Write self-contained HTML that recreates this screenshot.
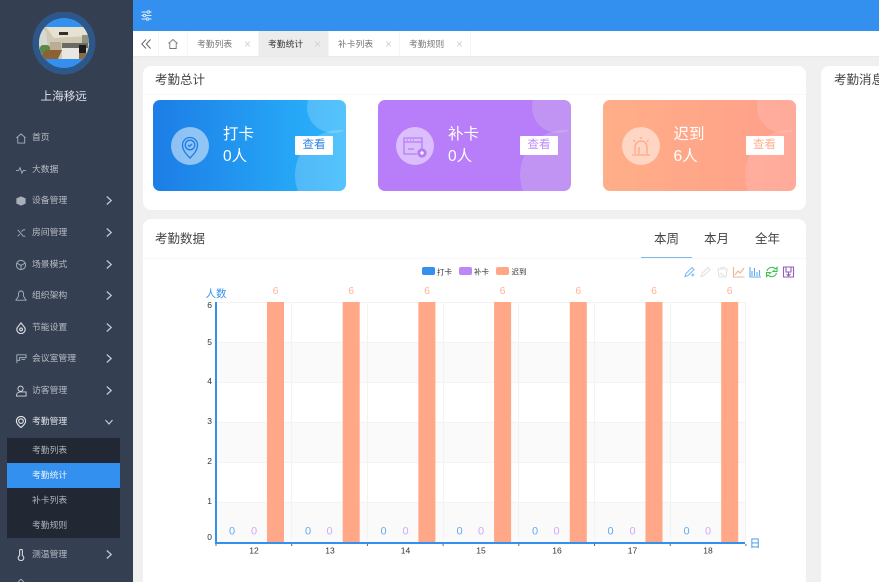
<!DOCTYPE html>
<html lang="zh"><head><meta charset="utf-8"><title>考勤统计</title>
<style>
*{box-sizing:border-box;margin:0;padding:0}
html,body{width:879px;height:582px;overflow:hidden;background:#f0f0f0;font-family:"Liberation Sans","Noto Sans CJK SC",sans-serif}
#root{position:relative;width:879px;height:582px;overflow:hidden;background:#f0f0f0;filter:blur(.3px)}
#side{position:absolute;left:0;top:0;width:133px;height:582px;background:#343f52;overflow:hidden}
#side .t{position:absolute;left:32px;font-size:8.8px;line-height:12px;color:#b9bec6;white-space:nowrap}
#side .ic{position:absolute;left:15px;width:12px;height:12px;fill:none;stroke:#a9afb9;stroke-width:1}
#side .ar{position:absolute;left:105.500px;width:6px;height:9px;fill:none;stroke:#c6cad0;stroke-width:1.200}
#sub{position:absolute;left:7px;top:438px;width:113px;height:100px;background:#212833}
#sub div{position:absolute;left:25px;font-size:8.8px;line-height:12px;color:#aeb3bb;white-space:nowrap}
#sub .a{position:absolute;left:0;top:25px;width:113px;height:25px;background:#3390ee}
#hd{position:absolute;left:133px;top:0;width:746px;height:31px;background:#3390ee}
#tabs{position:absolute;left:133px;top:31px;width:746px;height:25px;background:#fff;box-shadow:0 1px 1px rgba(0,0,0,.03)}
.tab{position:absolute;top:0;height:25px;border-right:1px solid #f5f5f5;font-size:8.8px;line-height:26px;color:#777}
.tab span{position:absolute;left:9px;white-space:nowrap}
.tab i{position:absolute;right:7px;top:0;font-style:normal;font-size:12px;color:#d0d0d0;line-height:26px}
.card{position:absolute;background:#fff;border-radius:8px}
.ct{position:absolute;left:12px;font-size:12.5px;line-height:16px;color:#444;white-space:nowrap}
.sc{position:absolute;top:100px;width:193px;height:91px;border-radius:7px;overflow:hidden;color:#fff}
.sc .b1,.sc .b2{position:absolute;border-radius:50%;background:rgba(255,255,255,.2)}
.sc .b1{left:154px;top:-19px;width:52px;height:52px}
.sc .b2{left:142px;top:30px;width:90px;height:90px}
.sc .c{position:absolute;left:18.500px;top:27px;width:38px;height:38px;border-radius:50%;background:rgba(255,255,255,.5)}
.sc svg{position:absolute;left:18.500px;top:27px;width:38px;height:38px;fill:none;stroke-width:1.300}
.sc .n{position:absolute;left:70.500px;font-size:15.500px;line-height:20px;white-space:nowrap}
.sc .btn{position:absolute;left:142.500px;top:36px;width:38px;height:19px;background:#fff;border-radius:1px;text-align:center;font-size:11.5px;line-height:19px}
</style></head><body><div id="root">

<div id="side">
<svg style="position:absolute;left:32px;top:12px" width="64" height="64" viewBox="0 0 64 64">
<defs><clipPath id="cp"><circle cx="32" cy="31" r="25"/></clipPath></defs>
<circle cx="32" cy="31" r="31.500" fill="#2d5788"/>
<circle cx="32" cy="31" r="25" fill="#3390ee"/>
<g clip-path="url(#cp)">
<rect x="5" y="15" width="54" height="32" fill="#cfc9b6"/>
<polygon points="14,15 59,15 56,24 22,26" fill="#e6e1d0"/>
<rect x="27" y="20" width="9" height="3" fill="#33302c"/>
<polygon points="5,15 14,19 16,38 5,47" fill="#d6d9d0"/>
<rect x="8" y="33" width="10" height="9" rx="3" fill="#5a8a48"/>
<polygon points="6,47 26,47 30,38 14,38" fill="#8c6234"/>
<rect x="18" y="30" width="11" height="8" fill="#b9ad96"/>
<rect x="30" y="31" width="26" height="5" fill="#6b6a63"/>
<rect x="30" y="36" width="17" height="11" fill="#e9e7e2"/>
<rect x="47" y="33" width="7" height="8" fill="#1d1c1c"/>
<rect x="47" y="41" width="12" height="6" fill="#8b6a45"/>
<rect x="50" y="23" width="9" height="8" fill="#90927e"/>
</g></svg>
<div style="position:absolute;left:40.5px;top:88px;font-size:11.6px;line-height:17px;color:#dfe2e6;white-space:nowrap">上海移远</div>

<svg class="ic" style="top:132px" viewBox="0 0 13 13"><path d="M3 6v6h7.500V6M1.500 6.500 6.500 2l5 4.500"/></svg>
<div class="t" style="top:131px">首页</div>
<svg class="ic" style="top:164px" viewBox="0 0 13 13"><path d="M1 7h3l1.500-3 2 6L9 7h3"/></svg>
<div class="t" style="top:163px">大数据</div>
<svg class="ic" style="top:195px" viewBox="0 0 13 13"><path d="M2 4 6.500 2 11 4v5L6.500 11 2 9z" fill="#a9afb9"/></svg>
<div class="t" style="top:194px">设备管理</div>
<svg class="ar" style="top:196px" viewBox="0 0 6 9"><path d="M.800.500 5.200 4.500.8 8.500"/></svg>
<svg class="ic" style="top:227px" viewBox="0 0 13 13"><path d="M3 3 9 10M3 10l2-2M9 3 7 5M9 3h2M9 10h2"/></svg>
<div class="t" style="top:226px">房间管理</div>
<svg class="ar" style="top:228px" viewBox="0 0 6 9"><path d="M.800.500 5.200 4.500.8 8.500"/></svg>
<svg class="ic" style="top:259px" viewBox="0 0 13 13"><circle cx="6.500" cy="6.500" r="5"/><path d="M2 4.500 6.500 7 11 4.500M6.500 7v4.500"/></svg>
<div class="t" style="top:258px">场景模式</div>
<svg class="ar" style="top:260px" viewBox="0 0 6 9"><path d="M.800.500 5.200 4.500.8 8.500"/></svg>
<svg class="ic" style="top:290px" viewBox="0 0 13 13"><path d="M4 6a2.800 3.500 0 1 1 5 0l1 2 2 3H1l2-3z"/></svg>
<div class="t" style="top:289px">组织架构</div>
<svg class="ar" style="top:291px" viewBox="0 0 6 9"><path d="M.800.500 5.200 4.500.8 8.500"/></svg>
<svg class="ic" style="top:322px;stroke:#d5d8dc;stroke-width:1.300" viewBox="0 0 13 13"><path d="M6.500 1 10.500 6a4.500 4.500 0 1 1-8 0z"/><circle cx="6.500" cy="8" r="1.500"/></svg>
<div class="t" style="top:321px">节能设置</div>
<svg class="ar" style="top:323px" viewBox="0 0 6 9"><path d="M.800.500 5.200 4.500.8 8.500"/></svg>
<svg class="ic" style="top:353px" viewBox="0 0 13 13"><path d="M2 11V2h10v3H5v3H2M7 7h4"/></svg>
<div class="t" style="top:352px">会议室管理</div>
<svg class="ar" style="top:354px" viewBox="0 0 6 9"><path d="M.800.500 5.200 4.500.8 8.500"/></svg>
<svg class="ic" style="top:385px;stroke:#d5d8dc" viewBox="0 0 13 13"><circle cx="6" cy="4" r="2.800"/><path d="M1.500 12c0-3 2-4.500 4.500-4.500H12V12z"/></svg>
<div class="t" style="top:384px">访客管理</div>
<svg class="ar" style="top:386px" viewBox="0 0 6 9"><path d="M.800.500 5.200 4.500.8 8.500"/></svg>
<svg class="ic" style="top:416px;stroke:#e6e8eb;stroke-width:1.200" viewBox="0 0 13 13"><path d="M6.500 12.500C3.500 10 1.500 7.500 1.500 5.500a5 5 0 0 1 10 0c0 2-2 4.500-5 7z"/><circle cx="6.500" cy="5.500" r="2.500"/></svg>
<div class="t" style="top:415px;color:#e4e6e9">考勤管理</div>
<svg style="position:absolute;left:104.500px;top:419px;fill:none;stroke:#c6cad0;stroke-width:1.200" width="8" height="6" viewBox="0 0 8 6"><path d="M.500 1 4 5 7.500 1"/></svg>

<div id="sub"><div class="a"></div>
<div style="top:6px">考勤列表</div><div style="top:31px;color:#eef4fc">考勤统计</div><div style="top:56px">补卡列表</div><div style="top:81px">考勤规则</div></div>

<svg class="ic" style="top:549px;stroke:#d5d8dc;stroke-width:1.200" viewBox="0 0 13 13"><path d="M5 7V1.800a1.500 1.500 0 0 1 3 0V7a3 3 0 1 1-3 0z"/></svg>
<div class="t" style="top:548px">测温管理</div>
<svg class="ar" style="top:550px" viewBox="0 0 6 9"><path d="M.800.500 5.200 4.500.8 8.500"/></svg>
<svg class="ic" style="top:579px" viewBox="0 0 13 13"><path d="M6.500 0 11 5H2z"/></svg>
</div>

<div id="hd"><svg style="position:absolute;left:8px;top:10px" width="11" height="11" viewBox="0 0 11 11" fill="none" stroke="#dcebfb" stroke-width="1"><path d="M.5 2h10M.5 5.500h10M.5 9h10"/><circle cx="7.500" cy="2" r="1.300" fill="#3390ee"/><circle cx="3.500" cy="5.500" r="1.300" fill="#3390ee"/><circle cx="6.500" cy="9" r="1.300" fill="#3390ee"/></svg></div>

<div id="tabs">
<div style="position:absolute;left:0;top:0;width:26px;height:25px;border-right:1px solid #f5f5f5"><svg style="position:absolute;left:8px;top:8px" width="10" height="10" viewBox="0 0 10 10" fill="none" stroke="#666" stroke-width="1"><path d="M5 .5.800 5 5 9.500M9.500.5 5.300 5l4.200 4.500"/></svg></div>
<div style="position:absolute;left:26px;top:0;width:29px;height:25px;border-right:1px solid #f5f5f5"><svg style="position:absolute;left:9px;top:8px" width="10" height="10" viewBox="0 0 10 10" fill="none" stroke="#777" stroke-width=".9"><path d="M.5 4.500 5 .5l4.500 4M1.800 4v5.500h6.400V4"/></svg></div>
<div class="tab" style="left:55px;width:71px"><span>考勤列表</span><i>×</i></div>
<div class="tab" style="left:126px;width:70px;background:#ececec;color:#333"><span>考勤统计</span><i>×</i></div>
<div class="tab" style="left:196px;width:71px"><span>补卡列表</span><i>×</i></div>
<div class="tab" style="left:267px;width:71px"><span>考勤规则</span><i>×</i></div>
</div>

<div class="card" style="left:143px;top:66px;width:663px;height:144px">
<div class="ct" style="top:6px">考勤总计</div>
<div style="position:absolute;left:0;top:28px;width:663px;height:1px;background:#f9f9f9"></div>
</div>

<div class="sc" style="left:152.500px;background:linear-gradient(90deg,#1c7de6,#2ab6fc)">
<div class="b1"></div><div class="b2"></div><div class="c"></div>
<svg viewBox="0 0 38 38" stroke="#1c7de6"><path d="M19 31C14 26 11.500 22.500 11.500 18a7.500 7.500 0 0 1 15 0c0 4.500-2.500 8-7.500 13z"/><circle cx="19" cy="18" r="4.800"/><path d="M17 18l1.500 1.500 2.500-2.500"/></svg>
<div class="n" style="top:25px">打卡</div><div class="n" style="top:47px">0人</div>
<div class="btn" style="color:#2f86e6">查看</div></div>

<div class="sc" style="left:377.500px;background:#b87df8">
<div class="b1" style="background:rgba(220,220,230,.25)"></div><div class="b2" style="background:rgba(220,220,230,.25)"></div><div class="c"></div>
<svg viewBox="0 0 38 38" stroke="#b57cf5"><path d="M26 22V11H8v16h13M8 15h18"/><path d="M11 13h1M14 13h1M17 13h1M12 22h6"/><circle cx="26" cy="26" r="4" fill="#b57cf5"/><path d="M24 26h4M26 24v4" stroke="#fff"/></svg>
<div class="n" style="top:25px">补卡</div><div class="n" style="top:47px">0人</div>
<div class="btn" style="color:#c08df5">查看</div></div>

<div class="sc" style="left:603px;background:linear-gradient(90deg,#ffae88,#ff9f8a)">
<div class="b1" style="background:rgba(255,200,200,.3)"></div><div class="b2" style="background:rgba(255,200,200,.3)"></div><div class="c"></div>
<svg viewBox="0 0 38 38" stroke="#ffa883"><path d="M13 27v-7a6 6 0 0 1 12 0v7M10 28h18M19 10v2M11.500 13l1.500 1.500M26.500 13 25 14.500M17 27v-7"/></svg>
<div class="n" style="top:25px">迟到</div><div class="n" style="top:47px">6人</div>
<div class="btn" style="color:#ffb08e">查看</div></div>

<div class="card" style="left:143px;top:219px;width:663px;height:380px">
<div class="ct" style="top:12px">考勤数据</div>
<div style="position:absolute;left:0;top:39px;width:663px;height:1px;background:#f7f7f7"></div>
<div style="position:absolute;left:498px;top:38px;width:51px;height:1px;background:#7dbaf4"></div>
<div style="position:absolute;left:511px;top:12px;font-size:12.5px;line-height:16px;color:#444">本周</div>
<div style="position:absolute;left:561px;top:12px;font-size:12.5px;line-height:16px;color:#444">本月</div>
<div style="position:absolute;left:612px;top:12px;font-size:12.5px;line-height:16px;color:#444">全年</div>
</div>

<div class="card" style="left:821px;top:66px;width:80px;height:540px;overflow:hidden">
<div class="ct" style="top:6px;left:13px">考勤消息</div>
</div>

<svg style="position:absolute;left:0;top:0" width="879" height="582" viewBox="0 0 879 582" font-family="'Liberation Sans','Noto Sans CJK SC',sans-serif">
<g fill="#fafafa"><rect x="216" y="342" width="530" height="40"/><rect x="216" y="422" width="530" height="40"/><rect x="216" y="502" width="530" height="40"/></g>
<g stroke="#f3f3f3" stroke-width="1" fill="none">
<path d="M216 302.500h530M216 342.500h530M216 382.500h530M216 422.500h530M216 462.500h530M216 502.500h530"/>
<path d="M291.500 302v240M367.500 302v240M443.500 302v240M518.500 302v240M594.500 302v240M670.500 302v240M745.500 302v240"/>
</g>
<g fill="#ffa786">
<rect x="267" y="302" width="17" height="240"/><rect x="342.700" y="302" width="17" height="240"/><rect x="418.400" y="302" width="17" height="240"/><rect x="494.100" y="302" width="17" height="240"/><rect x="569.800" y="302" width="17" height="240"/><rect x="645.500" y="302" width="17" height="240"/><rect x="721.200" y="302" width="17" height="240"/>
</g>
<path d="M216 302v241.500M215 543h530" stroke="#3390ee" stroke-width="2" fill="none"/>
<path d="M216 544v2M291.700 544v2M367.400 544v2M443.100 544v2M518.800 544v2M594.500 544v2M670.200 544v2M745.900 544v2" stroke="#666" stroke-width="1"/>
<g font-size="8.500" fill="#333" text-anchor="end">
<text x="212" y="308">6</text><text x="212" y="345">5</text><text x="212" y="384">4</text><text x="212" y="424">3</text><text x="212" y="464">2</text><text x="212" y="504">1</text><text x="212" y="540">0</text>
</g>
<g font-size="8.500" fill="#333" text-anchor="middle">
<text x="254" y="553.500">12</text><text x="330" y="553.500">13</text><text x="405.500" y="553.500">14</text><text x="481" y="553.500">15</text><text x="557" y="553.500">16</text><text x="632.500" y="553.500">17</text><text x="708" y="553.500">18</text>
</g>
<g font-size="10.500" fill="#ffb496" text-anchor="middle">
<text x="275.500" y="294">6</text><text x="351.200" y="294">6</text><text x="427" y="294">6</text><text x="502.600" y="294">6</text><text x="578.300" y="294">6</text><text x="654" y="294">6</text><text x="729.700" y="294">6</text>
</g>
<g font-size="11" fill="#63aaf2" text-anchor="middle">
<text x="232" y="534.500">0</text><text x="308" y="534.500">0</text><text x="383.500" y="534.500">0</text><text x="459.500" y="534.500">0</text><text x="535" y="534.500">0</text><text x="610.500" y="534.500">0</text><text x="686.500" y="534.500">0</text>
</g>
<g font-size="11" fill="#cfa8fa" text-anchor="middle">
<text x="254" y="534.500">0</text><text x="329.500" y="534.500">0</text><text x="405.500" y="534.500">0</text><text x="481" y="534.500">0</text><text x="556.500" y="534.500">0</text><text x="632.500" y="534.500">0</text><text x="708" y="534.500">0</text>
</g>
<text x="205.500" y="297" font-size="10.500" fill="#3390ee">人数</text>
<text x="749.500" y="547" font-size="11" fill="#3390ee">日</text>
<rect x="422" y="267" width="13" height="8" rx="2" fill="#3390ee"/><text x="437" y="274.500" font-size="7.500" fill="#333">打卡</text>
<rect x="459" y="267" width="13" height="8" rx="2" fill="#bd87f8"/><text x="474" y="274.500" font-size="7.500" fill="#333">补卡</text>
<rect x="496" y="267" width="13" height="8" rx="2" fill="#ffa786"/><text x="511.500" y="274.500" font-size="7.500" fill="#333">迟到</text>
<g fill="none" stroke-width="1.100">
<path d="M685 276.500l1-3 6-6 2 2-6 6zM691 275h3.500M692.800 273.500v3" stroke="#7dbaf4"/>
<path d="M701 276.500l1-3 6-6 2 2-6 6z" stroke="#e2e2e2"/>
<path d="M718 269h9l-1 8h-7zM720 268l5-1M720 273l4 3" stroke="#e2e2e2"/>
<path d="M733.500 267v10h11M735 275l3-4 2 2 4-5" stroke="#e9b794"/>
<path d="M750 267v10h11M752 276v-5M754.500 276v-8M757 276v-4M759.500 276v-6" stroke="#5ea9f1"/>
<path d="M767 271a5 5 0 0 1 8.500-2l1.500-1.500v4h-4l1.500-1.500M776.500 273a5 5 0 0 1-8.500 2l-1.500 1.500v-4h4l-1.500 1.500" stroke="#3cc04f"/>
<path d="M783.500 267h10v10h-10zM786 267v5h5v-5M788.500 272v3M786.500 274l2 2 2-2" stroke="#9160bd"/>
</g>
</svg>
</div></body></html>
